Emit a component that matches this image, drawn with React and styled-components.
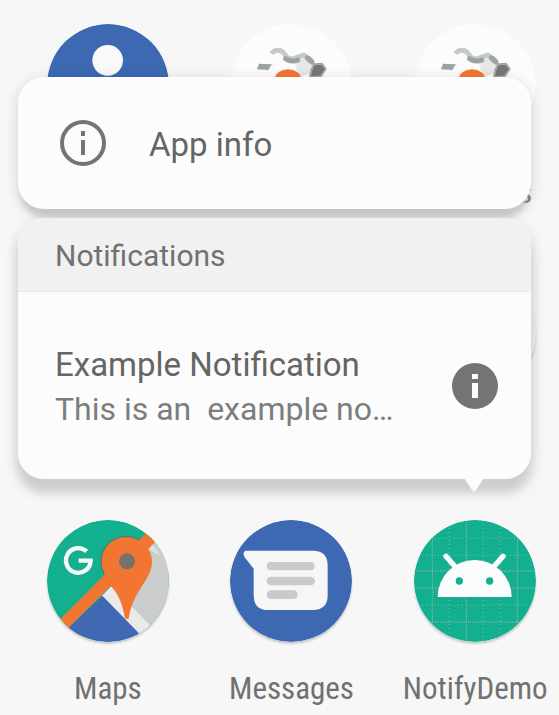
import React from "react";
import styled, { createGlobalStyle } from "styled-components";

const GlobalStyle = createGlobalStyle`
  *, *::before, *::after { box-sizing: border-box; }
  body {
    margin: 0;
    background: #f7f7f7;
    font-family: Roboto, "Liberation Sans", sans-serif;
    color: #656565;
    overflow: hidden;
  }
  button {
    margin: 0;
    padding: 0;
    border: 0;
    background: none;
    color: inherit;
    font: inherit;
    text-align: left;
    cursor: pointer;
  }
`;

const HomeScreen = styled.main`
  position: relative;
  min-height: 100vh;
  padding: 24px 0 0 16px;
  overflow: hidden;
`;

const AppGrid = styled.div`
  display: grid;
  grid-template-columns: repeat(3, 1fr);
  grid-auto-rows: 248px;
  margin-right: -8px;
  margin-bottom: -53px;
`;

const AppTile = styled.button`
  display: flex;
  flex-direction: column;
  align-items: center;
  gap: 28px;
`;

const AppIcon = styled.svg`
  display: block;
  width: 122px;
  height: 122px;
  flex: none;
  border-radius: 50%;
  box-shadow: 0 2px 2px ${(p) => (p.$flat ? "#eeeeee" : "#c9c9c9")};
`;

const AppLabel = styled.span`
  font-family: "Roboto Condensed", Roboto, sans-serif;
  font-size: 31px;
  line-height: 38px;
  color: #6f7271;
  white-space: nowrap;
  min-width: 114px;
  text-align: ${(p) => (p.$end ? "right" : "center")};
`;

const Popup = styled.div`
  position: absolute;
  top: 77px;
  left: 18px;
  right: 28px;
  display: flex;
  flex-direction: column;
  gap: 9px;
`;

const Card = styled.section`
  position: relative;
  border-radius: 26px;
  background: #fcfcfc;
  box-shadow: ${(p) =>
    p.$raised
      ? "0 16px 10px -4px #cccecd, 0 12px 14px 2px rgba(0, 0, 0, 0.1), 0 3px 12px 3px rgba(0, 0, 0, 0.06)"
      : "0 12px 6px -4px #c6c8c7, 0 3px 12px 3px rgba(0, 0, 0, 0.1)"};
`;

const ShortcutRow = styled.button`
  display: flex;
  align-items: center;
  gap: 42px;
  width: 100%;
  height: 132px;
  padding: 0 41px;
  font-size: 33px;
  line-height: 40px;
`;

const ShortcutLabel = styled.span`
  padding-top: 3px;
`;

const SectionTitle = styled.h2`
  margin: 0;
  padding: 19px 37px 16px;
  border-bottom: 1px solid #e8e8e8;
  border-radius: 26px 26px 0 0;
  background: #f1f1f1;
  font-size: 30px;
  line-height: 38px;
  font-weight: 400;
  color: #6f7271;
`;

const NotificationRow = styled.button`
  display: flex;
  align-items: center;
  justify-content: space-between;
  width: 100%;
  height: 187px;
  padding: 0 32px 0 37px;
`;

const NotificationText = styled.span`
  display: flex;
  flex-direction: column;
  padding-top: 2px;
  min-width: 0;
`;

const NotificationTitle = styled.span`
  font-size: 33px;
  line-height: 44px;
`;

const NotificationBody = styled.span`
  font-size: 32px;
  line-height: 44px;
  white-space: pre;
  color: #7b7e7d;
`;

const InfoGlyph = styled.svg`
  display: block;
  width: 48px;
  height: 48px;
  flex: none;
`;

const Pointer = styled.svg`
  position: absolute;
  right: 46px;
  top: 100%;
  width: 22px;
  height: 14px;
  margin-top: -1px;
`;

function ContactsIcon() {
  return (
    <AppIcon viewBox="0 0 366 366" aria-hidden="true">
      <circle cx="183" cy="183" r="183" fill="#3d69b3" />
      <circle cx="182" cy="109" r="46" fill="#f9f9f9" />
      <path d="M85 270c0-60 40-90 98-90s98 30 98 90z" fill="#f9f9f9" />
    </AppIcon>
  );
}

function WeatherIcon() {
  return (
    <AppIcon $flat viewBox="34 71 366 366" aria-hidden="true">
      <circle cx="217" cy="254" r="183" fill="#fcfcfc" />
      <path d="M230 188l26-18 30 18-13 32-34 10z" fill="#e6e7e7" />
      <path
        d="M159 160c8-14 28-14 38 0 8 14 20 20 36 12l22-8 24 16"
        fill="none"
        stroke="#c6c9c8"
        strokeWidth="15"
        strokeLinejoin="round"
      />
      <path
        d="M201 175q16 12 36 4M266 173l14 12"
        fill="none"
        stroke="#9aa2a3"
        strokeWidth="15"
        strokeLinecap="round"
      />
      <path d="M121 190l39 2-11 17-34-2z" fill="#9ba3a4" />
      <path
        d="M286 192l24-2 11 16-15 22-32 3 4-22z"
        fill="#747676"
        stroke="#a3a8a7"
        strokeWidth="6"
        strokeLinejoin="round"
      />
      <ellipse cx="208" cy="234" rx="39" ry="27" fill="#f27632" />
    </AppIcon>
  );
}

function BlankIcon() {
  return (
    <AppIcon viewBox="0 0 122 122" aria-hidden="true">
      <circle cx="61" cy="61" r="60" fill="#f4f4f4" />
    </AppIcon>
  );
}

function MapsIcon() {
  return (
    <AppIcon viewBox="54 59 366 366" aria-hidden="true">
      <clipPath id="maps-disc">
        <circle cx="237" cy="242" r="183" />
      </clipPath>
      <g clipPath="url(#maps-disc)">
        <path d="M54 59H420V425H54z" fill="#12b08f" />
        <path d="M372 110L247 258L420 431V59z" fill="#cacdcc" />
        <path d="M358 146l14-12 24 34z" fill="#dedfdf" />
        <path d="M218 287L247 257L385 395L350 430z" fill="#eaeaea" />
        <path d="M120 381L220 286L340 409L300 440H100z" fill="#3f69b2" />
        <path d="M80 370L225 225L364 86L390 114L105 396z" fill="#f27632" />
        <path
          d="M293 109A76 76 0 0 1 369 185C369 237 313 268 299 355H288C281 308 266 276 244 256L225 220A76 76 0 0 1 293 109Z"
          fill="#f27632"
        />
        <path d="M226 222A76 76 0 0 1 331 119" fill="none" stroke="#596e64" strokeWidth="3" />
        <circle cx="294" cy="183" r="24" fill="#75716d" />
        <path d="M173 153a37 37 0 1 0 12 28h-36" fill="none" stroke="#f7f7f7" strokeWidth="13" />
      </g>
    </AppIcon>
  );
}

function MessagesIcon() {
  return (
    <AppIcon viewBox="63 59 366 366" aria-hidden="true">
      <circle cx="246" cy="242" r="183" fill="#3d69b3" />
      <path
        d="M110 151H312Q356 151 356 195V285Q356 329 312 329H178Q134 329 134 285V205L107 171Q99 154 110 151Z"
        fill="#f6f6f6"
      />
      <rect x="173" y="185" width="144" height="25" rx="12" fill="#c8cbca" />
      <rect x="173" y="229" width="145" height="26" rx="13" fill="#c8cbca" />
      <rect x="173" y="270" width="93" height="26" rx="13" fill="#c8cbca" />
    </AppIcon>
  );
}

function AndroidIcon() {
  return (
    <AppIcon viewBox="73 180 366 366" aria-hidden="true">
      <clipPath id="android-disc">
        <circle cx="256" cy="363" r="183" />
      </clipPath>
      <g clipPath="url(#android-disc)">
        <path d="M73 180H439V546H73z" fill="#12b08f" />
        <path
          d="M128 180V546M230 180V546M383 180V546M73 333H439M73 384H439M73 486H439"
          stroke="#a8b5ab"
          strokeWidth="3"
          strokeDasharray="3 3"
        />
        <path
          d="M179 180V546M281 180V546M332 180V546M73 235H439M73 286H439M73 435H439"
          stroke="#8ab5a6"
          strokeWidth="3"
          strokeDasharray="3 9"
        />
        <path d="M150 418H358M170 430H290M185 445H245" stroke="#316fa7" strokeWidth="2" strokeDasharray="3 7" />
      </g>
      <path d="M144 411A111 111 0 0 1 366 411Z" fill="#fcfcfc" />
      <path d="M169 289L198 322M340 289L311 322" stroke="#fcfcfc" strokeWidth="16" strokeLinecap="round" />
      <circle cx="209" cy="363" r="11" fill="#12b08f" />
      <circle cx="300" cy="363" r="11" fill="#12b08f" />
    </AppIcon>
  );
}

const apps = [
  { id: "contacts", Icon: ContactsIcon },
  { id: "weather-a", Icon: WeatherIcon },
  { id: "weather-b", Icon: WeatherIcon, label: "s", end: true },
  { id: "empty-a" },
  { id: "empty-b" },
  { id: "blank", Icon: BlankIcon },
  { id: "maps", Icon: MapsIcon, label: "Maps" },
  { id: "messages", Icon: MessagesIcon, label: "Messages" },
  { id: "notify", Icon: AndroidIcon, label: "NotifyDemo" },
];

export default function App() {
  return (
    <>
      <GlobalStyle />
      <HomeScreen>
        <AppGrid>
          {apps.map(({ id, Icon, label, end }) =>
            Icon ? (
              <AppTile key={id} type="button" aria-label={label ? undefined : id}>
                <Icon />
                {label && <AppLabel $end={end}>{label}</AppLabel>}
              </AppTile>
            ) : (
              <span key={id} />
            )
          )}
        </AppGrid>
        <Popup>
          <Card>
            <ShortcutRow type="button">
              <InfoGlyph viewBox="0 0 48 48" aria-hidden="true">
                <circle cx="24" cy="24" r="21" fill="none" stroke="#737574" strokeWidth="4" />
                <path d="M22 12h4v5h-4zM22 21h4v15h-4z" fill="#737574" />
              </InfoGlyph>
              <ShortcutLabel>App info</ShortcutLabel>
            </ShortcutRow>
          </Card>
          <Card $raised>
            <SectionTitle>Notifications</SectionTitle>
            <NotificationRow type="button">
              <NotificationText>
                <NotificationTitle>Example Notification</NotificationTitle>
                <NotificationBody>{"This is an  example no…"}</NotificationBody>
              </NotificationText>
              <InfoGlyph viewBox="0 0 48 48" aria-hidden="true">
                <circle cx="24" cy="24" r="23" fill="#737574" />
                <path d="M21 12h6v5h-6zM21 21h6v15h-6z" fill="#fcfcfc" />
              </InfoGlyph>
            </NotificationRow>
            <Pointer viewBox="0 0 22 14" aria-hidden="true">
              <path d="M1 0H21L13 12Q11 15 9 12Z" fill="#fcfcfc" />
            </Pointer>
          </Card>
        </Popup>
      </HomeScreen>
    </>
  );
}
